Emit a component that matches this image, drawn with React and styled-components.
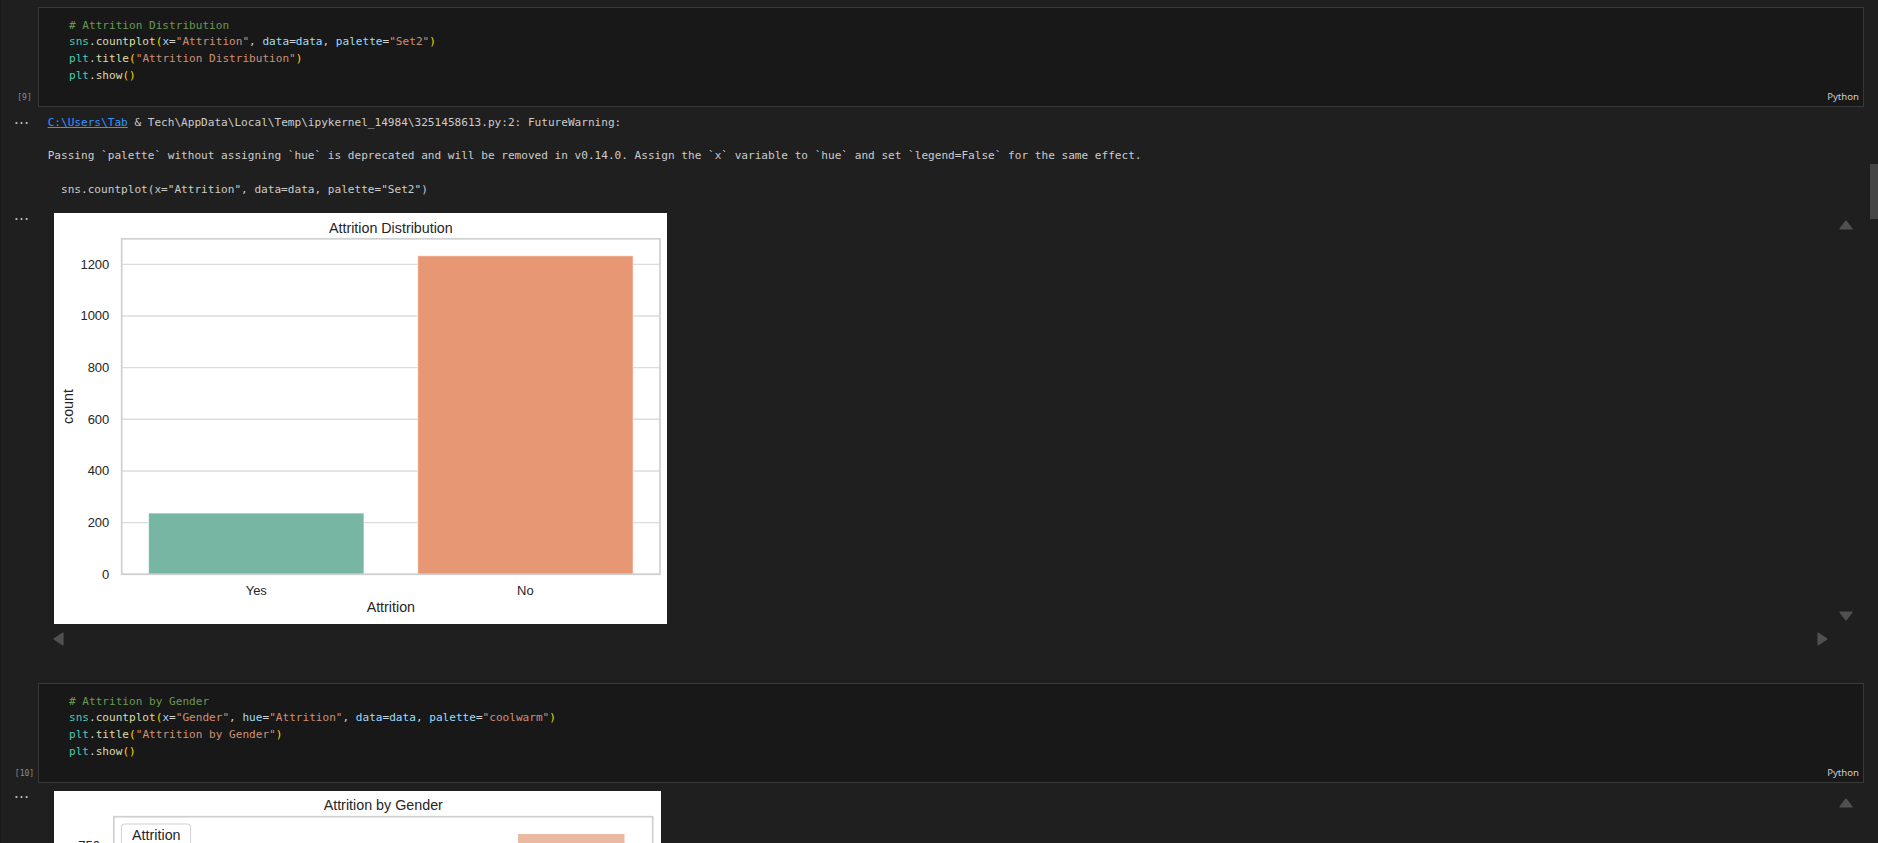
import React from 'react';
import styled, { createGlobalStyle } from 'styled-components';

const MONO = `"DejaVu Sans Mono", "Liberation Mono", monospace`;
const SANS = `"Liberation Sans", Arial, sans-serif`;

const GlobalStyle = createGlobalStyle`
  html, body {
    margin: 0;
    padding: 0;
    overflow: hidden;
    background: #1f1f1f;
  }
`;

const tokenColors = {
  comment: '#6a9955',
  module: '#4ec9b0',
  fn: '#dcdcaa',
  paren: '#ffd700',
  param: '#9cdcfe',
  str: '#ce9178',
  plain: '#d4d4d4',
};

// ---- page / cells ----

const Page = styled.main`
  position: relative;
  min-height: 100vh;
  padding-top: 7.3px;
  border-left: 1px solid #181818;
  box-sizing: border-box;
  background: #1f1f1f;
`;

const ScrollThumb = styled.div`
  position: absolute;
  top: 164px;
  right: 0;
  width: 8px;
  height: 55px;
  background: #454545;
`;

const Cell = styled.section`
  display: flex;
  margin-top: ${(p) => p.$gap || 0}px;
  margin-right: 14px;
`;

const Gutter = styled.div`
  display: flex;
  align-items: flex-end;
  justify-content: center;
  width: 37px;
  padding: 0 0 3.5px 10px;
  box-sizing: border-box;
  font-family: ${MONO};
  font-size: 8px;
  line-height: 12px;
  color: #8d8d8d;
`;

const CellBox = styled.div`
  flex: 1;
  background: #181818;
  border: 1px solid #383838;
  padding: 9.4px 0 0 30px;
`;

const Code = styled.pre`
  margin: 0;
  font-family: ${MONO};
  font-size: 11.08px;
  line-height: 16.67px;
  color: #d4d4d4;
`;

const Tok = styled.span`
  color: ${(p) => tokenColors[p.$k]};
`;

const CellFooter = styled.div`
  display: flex;
  justify-content: flex-end;
  padding: 6px 4px 3px;
  font-family: "Noto Sans", "Open Sans", sans-serif;
  font-size: 9.6px;
  line-height: 13px;
  color: #cccccc;
`;

// ---- outputs ----

const OutputRow = styled.div`
  display: flex;
  margin-top: ${(p) => p.$gap}px;
`;

const OutputGutter = styled.div`
  width: 37px;
  flex-shrink: 0;
  padding: ${(p) => p.$top}px 0 0 14px;
  box-sizing: border-box;

  svg {
    display: block;
  }
`;

const OutputText = styled.div`
  padding-left: 9.7px;
  font-family: ${MONO};
  font-size: 11.08px;
  line-height: 16.67px;
  color: #cccccc;
`;

const OutLine = styled.div`
  white-space: pre;
  min-height: 16.67px;
`;

const PathLink = styled.span`
  color: #3794ff;
  text-decoration: underline;
`;

const Scroller = styled.div`
  flex: 1;
  display: grid;
  grid-template-columns: 1fr 28px;
  grid-template-rows: auto 14.3px;
  row-gap: 7.7px;
  margin-right: 18.3px;
  margin-left: 15px;
`;

const Figure = styled.div`
  margin-left: 1px;
`;

const VBar = styled.div`
  display: flex;
  flex-direction: column;
  justify-content: ${(p) => (p.$single ? 'flex-start' : 'space-between')};
  align-items: center;
  padding: 7.3px 0 3px;

  svg {
    display: block;
  }
`;

const HBar = styled.div`
  display: flex;
  justify-content: space-between;
  align-items: center;
  padding-right: 3.4px;

  svg {
    display: block;
  }
`;

const ChartSvg = styled.svg`
  display: block;
  background: #ffffff;
  font-family: ${SANS};

  text {
    fill: #262626;
  }
`;

const Dots = () => (
  <svg width="13" height="4" viewBox="0 0 13 4">
    {[1.4, 6.5, 11.6].map((cx) => (
      <circle key={cx} cx={cx} cy="2" r="1.1" fill="#c4c4c4" />
    ))}
  </svg>
);

const arrowShapes = {
  up: { w: 14, h: 10, d: 'M7 1.3 L12.8 8.8 L1.2 8.8 Z' },
  down: { w: 14, h: 10, d: 'M7 8.7 L12.8 1.2 L1.2 1.2 Z' },
  left: { w: 11, h: 14, d: 'M1.4 7 L9.8 1.3 L9.8 12.7 Z' },
  right: { w: 11, h: 14, d: 'M9.6 7 L1.2 1.3 L1.2 12.7 Z' },
};

const Arrow = ({ dir }) => {
  const s = arrowShapes[dir];
  return (
    <svg width={s.w} height={s.h} viewBox={`0 0 ${s.w} ${s.h}`}>
      <path d={s.d} fill="#505050" stroke="#505050" strokeWidth="1.6" strokeLinejoin="round" />
    </svg>
  );
};

// ---- charts ----

const attrition = [
  { label: 'Yes', value: 237, color: '#76b6a2' },
  { label: 'No', value: 1233, color: '#e89774' },
];

const DistributionChart = () => {
  const ax = { left: 67.7, right: 606, top: 25.8, base: 361.3 };
  const k = 0.2583;
  const y = (v) => ax.base - v * k;
  const band = (ax.right - ax.left) / 2;
  const ticks = [0, 200, 400, 600, 800, 1000, 1200];
  const mid = (ax.left + ax.right) / 2;

  return (
    <ChartSvg width="613" height="411.3" viewBox="0 0 613 411.3">
      <text x={mid} y="15" fontSize="14.3" textAnchor="middle" dominantBaseline="central">
        Attrition Distribution
      </text>
      {ticks.map((t) => (
        <g key={t}>
          <line x1={ax.left} x2={ax.right} y1={y(t)} y2={y(t)} stroke="#dcdcdc" strokeWidth="1.4" />
          <text x="55.3" y={y(t)} fontSize="13" textAnchor="end" dominantBaseline="central">
            {t}
          </text>
        </g>
      ))}
      {attrition.map((d, i) => {
        const x = ax.left + i * band + band * 0.1;
        return (
          <g key={d.label}>
            <rect
              x={x}
              y={y(d.value)}
              width={band * 0.8}
              height={d.value * k}
              fill={d.color}
              stroke="rgba(255,255,255,0.55)"
              strokeWidth="1"
            />
            <text x={x + band * 0.4} y="377.8" fontSize="13" textAnchor="middle" dominantBaseline="central">
              {d.label}
            </text>
          </g>
        );
      })}
      <rect
        x={ax.left}
        y={ax.top}
        width={ax.right - ax.left}
        height={ax.base - ax.top}
        fill="none"
        stroke="#d0d0d0"
        strokeWidth="1.7"
      />
      <text x={mid} y="394.3" fontSize="14.3" textAnchor="middle" dominantBaseline="central">
        Attrition
      </text>
      <text
        x="14.3"
        y={(ax.top + ax.base) / 2}
        fontSize="14.3"
        textAnchor="middle"
        dominantBaseline="central"
        transform={`rotate(-90 14.3 ${(ax.top + ax.base) / 2})`}
      >
        count
      </text>
    </ChartSvg>
  );
};

const GenderChart = () => {
  const ax = { left: 59.8, right: 598.7, top: 25.7, base: 370 };
  const mid = (ax.left + ax.right) / 2;
  return (
    <ChartSvg width="607" height="411" viewBox="0 0 607 411">
      <text x={mid} y="14" fontSize="14.3" textAnchor="middle" dominantBaseline="central">
        Attrition by Gender
      </text>
      <line x1={ax.left} x2={ax.right} y1="54.5" y2="54.5" stroke="#dcdcdc" strokeWidth="1.4" />
      <text x="46" y="54.5" fontSize="13" textAnchor="end" dominantBaseline="central">
        750
      </text>
      <rect x="464" y="43" width="106.5" height={ax.base - 43} fill="#e9b9a2" />
      <rect
        x={ax.left}
        y={ax.top}
        width={ax.right - ax.left}
        height={ax.base - ax.top}
        fill="none"
        stroke="#d0d0d0"
        strokeWidth="1.7"
      />
      <rect x="67.4" y="33" width="69.2" height="62" rx="3" fill="rgba(255,255,255,0.85)" stroke="#d0d0d0" />
      <text x="102.3" y="44" fontSize="14.3" textAnchor="middle" dominantBaseline="central">
        Attrition
      </text>
    </ChartSvg>
  );
};

// ---- text content ----

const warningLines = [
  '',
  'Passing `palette` without assigning `hue` is deprecated and will be removed in v0.14.0. Assign the `x` variable to `hue` and set `legend=False` for the same effect.',
  '',
  '  sns.countplot(x="Attrition", data=data, palette="Set2")',
];

const CodeCell = ({ count, gap, children }) => (
  <Cell $gap={gap}>
    <Gutter>[{count}]</Gutter>
    <CellBox>
      <Code>{children}</Code>
      <CellFooter>Python</CellFooter>
    </CellBox>
  </Cell>
);

const FigureOutput = ({ gap, children, scrollable }) => (
  <OutputRow $gap={gap}>
    <OutputGutter $top={4.3}>
      <Dots />
    </OutputGutter>
    <Scroller>
      <Figure>{children}</Figure>
      <VBar $single={!scrollable}>
        <Arrow dir="up" />
        {scrollable && <Arrow dir="down" />}
      </VBar>
      {scrollable && (
        <HBar>
          <Arrow dir="left" />
          <Arrow dir="right" />
        </HBar>
      )}
    </Scroller>
  </OutputRow>
);

const App = () => {
  return (
    <Page>
      <GlobalStyle />
      <ScrollThumb />

      <CodeCell count={9}>
        <Tok $k="comment"># Attrition Distribution</Tok>
        {'\n'}
        <Tok $k="module">sns</Tok>.<Tok $k="fn">countplot</Tok>
        <Tok $k="paren">(</Tok>
        <Tok $k="param">x</Tok>=<Tok $k="str">"Attrition"</Tok>, <Tok $k="param">data</Tok>=
        <Tok $k="param">data</Tok>, <Tok $k="param">palette</Tok>=<Tok $k="str">"Set2"</Tok>
        <Tok $k="paren">)</Tok>
        {'\n'}
        <Tok $k="module">plt</Tok>.<Tok $k="fn">title</Tok>
        <Tok $k="paren">(</Tok>
        <Tok $k="str">"Attrition Distribution"</Tok>
        <Tok $k="paren">)</Tok>
        {'\n'}
        <Tok $k="module">plt</Tok>.<Tok $k="fn">show</Tok>
        <Tok $k="paren">()</Tok>
      </CodeCell>

      <OutputRow $gap={7.7}>
        <OutputGutter $top={6}>
          <Dots />
        </OutputGutter>
        <OutputText>
          <OutLine>
            <PathLink>C:\Users\Tab</PathLink> &amp; Tech\AppData\Local\Temp\ipykernel_14984\3251458613.py:2: FutureWarning:
          </OutLine>
          {warningLines.map((line, i) => (
            <OutLine key={i}>{line}</OutLine>
          ))}
        </OutputText>
      </OutputRow>

      <FigureOutput gap={14.4} scrollable>
        <DistributionChart />
      </FigureOutput>

      <CodeCell count={10} gap={37.3}>
        <Tok $k="comment"># Attrition by Gender</Tok>
        {'\n'}
        <Tok $k="module">sns</Tok>.<Tok $k="fn">countplot</Tok>
        <Tok $k="paren">(</Tok>
        <Tok $k="param">x</Tok>=<Tok $k="str">"Gender"</Tok>, <Tok $k="param">hue</Tok>=
        <Tok $k="str">"Attrition"</Tok>, <Tok $k="param">data</Tok>=<Tok $k="param">data</Tok>,{' '}
        <Tok $k="param">palette</Tok>=<Tok $k="str">"coolwarm"</Tok>
        <Tok $k="paren">)</Tok>
        {'\n'}
        <Tok $k="module">plt</Tok>.<Tok $k="fn">title</Tok>
        <Tok $k="paren">(</Tok>
        <Tok $k="str">"Attrition by Gender"</Tok>
        <Tok $k="paren">)</Tok>
        {'\n'}
        <Tok $k="module">plt</Tok>.<Tok $k="fn">show</Tok>
        <Tok $k="paren">()</Tok>
      </CodeCell>

      <FigureOutput gap={7.7}>
        <GenderChart />
      </FigureOutput>
    </Page>
  );
};

export default App;
